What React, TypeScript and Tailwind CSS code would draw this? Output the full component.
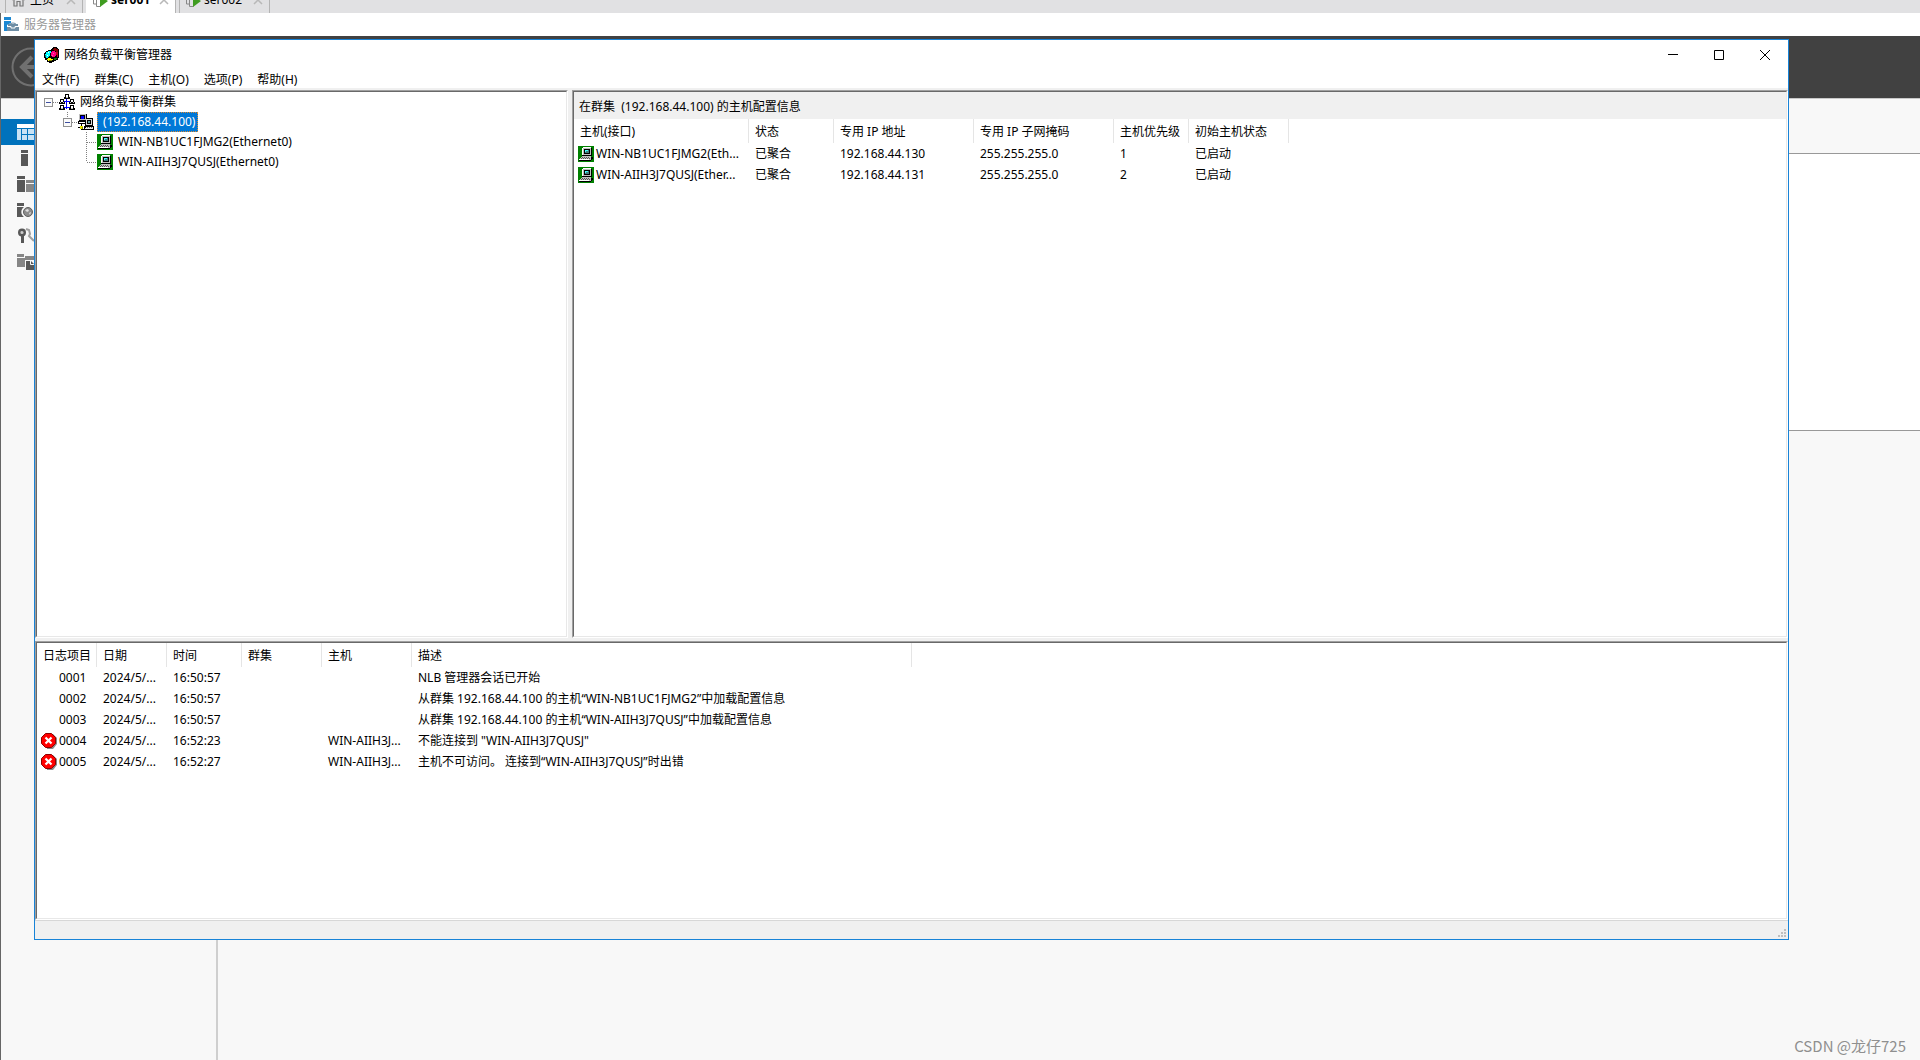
import React from 'react';

type PaneProps = { className?: string; children: React.ReactNode };

const menus = ['文件(F)', '群集(C)', '主机(O)', '选项(P)', '帮助(H)'];

const hosts = [
  { name: 'WIN-NB1UC1FJMG2(Ethernet0)', short: 'WIN-NB1UC1FJMG2(Eth...', status: '已聚合', ip: '192.168.44.130', mask: '255.255.255.0', priority: '1', initial: '已启动' },
  { name: 'WIN-AIIH3J7QUSJ(Ethernet0)', short: 'WIN-AIIH3J7QUSJ(Ether...', status: '已聚合', ip: '192.168.44.131', mask: '255.255.255.0', priority: '2', initial: '已启动' },
];

const logs = [
  { id: '0001', error: false, date: '2024/5/...', time: '16:50:57', cluster: '', host: '', text: 'NLB 管理器会话已开始' },
  { id: '0002', error: false, date: '2024/5/...', time: '16:50:57', cluster: '', host: '', text: '从群集 192.168.44.100 的主机“WIN-NB1UC1FJMG2”中加载配置信息' },
  { id: '0003', error: false, date: '2024/5/...', time: '16:50:57', cluster: '', host: '', text: '从群集 192.168.44.100 的主机“WIN-AIIH3J7QUSJ”中加载配置信息' },
  { id: '0004', error: true, date: '2024/5/...', time: '16:52:23', cluster: '', host: 'WIN-AIIH3J...', text: '不能连接到 "WIN-AIIH3J7QUSJ"' },
  { id: '0005', error: true, date: '2024/5/...', time: '16:52:27', cluster: '', host: 'WIN-AIIH3J...', text: '主机不可访问。 连接到“WIN-AIIH3J7QUSJ”时出错' },
];

/* ---------- icons ---------- */

const NlbIcon = () => (
  <svg width="16" height="16" viewBox="0 0 16 16" shapeRendering="crispEdges">
    <path d="M9 0h4v1h1v1h1v9h-1v2h-2v1h-2v1H8v1H5v-1H3v-2H1v-2H0V6h1V5h1V4h2V3h3V2h1V1h1z" fill="#000" />
    <path d="M10 1h2v1h2v3h-2V4h-2V3H9V2h1z" fill="#800000" />
    <path d="M12 5h2v5h-1V8h-1z" fill="#c00020" />
    <path d="M4 4h3v2H6v3H5v1H4v1H2v-1H1V7h1V5h2z" fill="#00ffff" />
    <path d="M4 5h1v1H4zM3 8h1v1H3z" fill="#fff" />
    <path d="M8 4h3v1h1v4h-1v1H8V9H7V5h1z" fill="#ff0080" />
    <path d="M9 6h1v1H9zM8 8h1v1H8z" fill="#ff60b0" />
    <path d="M3 12h1v-1h3v1h2v1H8v1H4v-1H3z" fill="#ffff00" />
    <path d="M5 13h3v1H5z" fill="#808000" />
    <path d="M10 11h3v1h-1v1h-2z" fill="#008000" />
    <path d="M1 8h1v2H1z" fill="#008080" />
  </svg>
);

const HostIcon = () => (
  <svg className="shrink-0" width="16" height="16" viewBox="0 0 16 16" shapeRendering="crispEdges">
    <path d="M0 0h16v16H0z" fill="#008000" />
    <path d="M13 2h1v8h-1zM4 9h10v1H4zM13 11h2v2h-1v1h-1v1H1v-1h12z" fill="#000" />
    <path d="M5 1h8v8H5z" fill="#c0c0c0" />
    <path d="M5 1h8v1H5zM4 2h1v7H4z" fill="#fff" />
    <path d="M6 3h6v5H6z" fill="#000" />
    <path d="M7 4h4v3H7z" fill="#408080" />
    <path d="M7 4h3v1H7zM7 5h1v1H7z" fill="#40ffff" />
    <path d="M4 10h9v1H4zM3 11h10v1H3zM2 12h11v1H2zM1 13h12v1H1z" fill="#c0c0c0" />
    <path d="M4 11h1v1H4zM6 11h1v1H6zM8 11h1v1H8zM10 11h1v1h-1zM3 12h1v1H3zM5 12h1v1H5zM7 12h1v1H7zM9 12h1v1H9zM11 12h1v1h-1z" fill="#555" />
    <path d="M1 13h10v1H1z" fill="#fff" />
  </svg>
);

const ClusterIcon = () => (
  <svg className="shrink-0" width="16" height="16" viewBox="0 0 16 16" shapeRendering="crispEdges">
    <path d="M1 0h8v7H1zM0 7h9v3H0zM7 4h8v8H7zM6 12h10v4H6z" fill="#000" />
    <path d="M1 0h7v1H2v5H1zM2 5h6v1H2zM7 1h1v4H7z" fill="#c0c0c0" />
    <path d="M3 2h3v3H3z" fill="#0000ff" />
    <path d="M1 8h6v1H1z" fill="#fff" />
    <path d="M8 5h6v6H8z" fill="#d8d8d8" />
    <path d="M9 6h4v4H9z" fill="#000" />
    <path d="M10 7h2v2h-2z" fill="#60a0a0" />
    <path d="M8 13h7v1H8zM7 14h8v1H7z" fill="#e8e8e8" />
    <path d="M9 13h1v1H9zM11 13h1v1h-1zM13 13h1v1h-1z" fill="#707070" />
    <path d="M3 10h1v3H3zM0 13h2v1H0zM3 15h3v1H3z" fill="#000" />
    <path d="M2 12h3v3H2z" fill="#e8e800" />
    <path d="M4 13h1v2H4z" fill="#808000" />
  </svg>
);

const ClustersIcon = () => (
  <svg className="shrink-0" width="16" height="16" viewBox="0 0 16 16" shapeRendering="crispEdges">
    <path d="M7 5h1v10H7zM5 7h6v1H5zM5 13h6v1H5z" fill="#0000ff" />
    <path d="M6 0h4v3h1v2H5V3h1zM1 5h4v3h1v2H0V8h1zM11 5h4v3h1v2h-6V8h1zM1 11h4v3h1v2H0v-2h1zM11 11h4v3h1v2h-6v-2h1z" fill="#000" />
    <path d="M7 1h2v2H7zM2 6h2v2H2zM12 6h2v2h-2zM2 12h2v2H2zM12 12h2v2h-2z" fill="#fff" />
    <path d="M6 4h4v0zM1 8h1v1H1zM4 8h1v1H4zM11 8h1v1h-1zM14 8h1v1h-1zM2 14h2v1H2zM12 14h2v1h-2zM7 3h2v1H7z" fill="#c0c0c0" />
  </svg>
);

const ErrorIcon = () => (
  <svg className="shrink-0" width="16" height="16" viewBox="0 0 16 16">
    <path d="M5 1h7l4 4v6l-4 5H6z" fill="#8a8a8a" />
    <path d="M4.500 .5h6l4 4v6l-4 4h-6l-4-4v-6z" fill="#ff0000" stroke="#900000" />
    <path d="M4.500 4.500l6 6M10.500 4.500l-6 6" stroke="#fff" strokeWidth="2.200" />
  </svg>
);

const ServerManagerIcon = () => (
  <svg width="15" height="15" viewBox="0 0 15 15">
    <path d="M0 0h7v3H0zM0 4h7v2L3 8v6H0z" fill="#1c87d2" />
    <path d="M6.500 7.500c0-2 5-2 5 0" fill="none" stroke="#6f8ea5" strokeWidth="1.200" />
    <path d="M4 7h10v3H4zM3 10h12v4H3z" fill="#6f8ea5" />
    <path d="M3 9.500h4v1.500h4V9.500h4" fill="none" stroke="#fff" strokeWidth="1" />
  </svg>
);

const HomeIcon = () => (
  <svg width="15" height="14" viewBox="0 0 15 14" fill="none" stroke="#777" strokeWidth="1.200">
    <path d="M1 7l6.500-6L14 7M3 6v7h3V8.500h3V13h3V6" />
  </svg>
);

const VmIcon = () => (
  <svg width="17" height="15" viewBox="0 0 17 15">
    <path d="M1.500 2v9h3M4.500 1v12.500h4" fill="none" stroke="#888" />
    <path d="M8 3l8 5-8 6z" fill="#3f9c20" />
  </svg>
);

const TabClose = () => (
  <svg width="10" height="10" viewBox="0 0 10 10" stroke="#b8b8b8" strokeWidth="1.500">
    <path d="M1 1l8 8M9 1L1 9" />
  </svg>
);

const sideIcons = [
  <svg key="dashboard" width="17" height="16" viewBox="0 0 17 16">
    <path d="M0 0h17v4H0z" fill="#fff" />
    <path d="M0 5h4v11H0zM5 5h5v5H5zM11 5h6v5h-6zM5 11h5v5H5zM11 11h6v5h-6z" fill="#c8e2f4" />
  </svg>,
  <svg key="local" width="17" height="16" viewBox="0 0 17 16" fill="#585858">
    <path d="M4 0h7v3H4zM4 4h7v12H4z" />
  </svg>,
  <svg key="all" width="17" height="16" viewBox="0 0 17 16">
    <path d="M0 0h8v3H0zM0 4h8v12H0z" fill="#585858" />
    <path d="M9 4h8v3H9zM9 8h8v8H9z" fill="#868686" />
  </svg>,
  <svg key="files" width="17" height="16" viewBox="0 0 17 16">
    <path d="M0 1h7v3H0zM0 5h7a6 6 0 0 0 0 10H0z" fill="#585858" />
    <circle cx="11" cy="10" r="4.500" fill="#8c8c8c" stroke="#606060" />
    <path d="M8 8l3-1 1 2-2 1zM12 11l2-1-1 3z" fill="#e0e0e0" />
  </svg>,
  <svg key="keys" width="17" height="16" viewBox="0 0 17 16">
    <path d="M9 1l3 1 1 4-1 2 5 5" fill="none" stroke="#a0a0a0" strokeWidth="2" />
    <circle cx="5" cy="4.500" r="2.800" fill="#ccc" stroke="#585858" strokeWidth="2.400" />
    <path d="M4 8h3v7H4z" fill="#585858" />
  </svg>,
  <svg key="storage" width="17" height="16" viewBox="0 0 17 16">
    <path d="M0 0h7v3H0zM0 4h8v9H0zM8 2h9v4H8z" fill="#868686" />
    <path d="M9 7h5l3 3v6H9z" fill="#585858" />
    <path d="M13.500 7v3.500H17" fill="none" stroke="#f7f7f7" />
  </svg>,
];

/* ---------- tree ---------- */

const Expander = ({ child, label }: { child?: boolean; label: string }) => (
  <button type="button" aria-label={label} className="h-5 w-[19px] shrink-0">
    <svg width="19" height="20" viewBox="0 0 19 20" shapeRendering="crispEdges" fill="none">
      {child && <path d="M8.500 0v5" stroke="#808080" strokeDasharray="1 1" />}
      <path d="M13 10.500h6" stroke="#808080" strokeDasharray="1 1" />
      <rect x="4.500" y="6.500" width="8" height="8" fill="#fafafa" stroke="#919191" />
      <path d="M6 10.500h5" stroke="#3e4fa0" />
    </svg>
  </button>
);

const Branch = ({ last }: { last: boolean }) => (
  <svg className="shrink-0" width="19" height="20" viewBox="0 0 19 20" shapeRendering="crispEdges" fill="none" stroke="#808080" strokeDasharray="1 1">
    <path d={last ? 'M8.500 0v10' : 'M8.500 0v20'} />
    <path d="M9 10.500h10" />
  </svg>
);

const TreePane = () => (
  <ul className="pl-[3px]">
    <li>
      <div className="flex h-5 items-center">
        <Expander label="折叠群集列表" />
        <ClustersIcon />
        <span className="ml-[3px] px-0.5">网络负载平衡群集</span>
      </div>
      <ul className="pl-[19px]">
        <li>
          <div className="flex h-5 items-center">
            <Expander child label="折叠群集" />
            <ClusterIcon />
            <span className="ml-[3px] h-5 whitespace-pre border border-dotted border-[#e08a30] bg-[#0078d7] px-0.5 leading-[18px] text-white"> (192.168.44.100)</span>
          </div>
          <ul className="pl-[19px]">
            {hosts.map((host, i) => (
              <li key={host.name} className="flex h-5 items-center">
                <Branch last={i === hosts.length - 1} />
                <HostIcon />
                <span className="ml-[3px] px-0.5">{host.name}</span>
              </li>
            ))}
          </ul>
        </li>
      </ul>
    </li>
  </ul>
);

/* ---------- lists ---------- */

const Th = ({ children }: { children: React.ReactNode }) => (
  <th className="h-6 whitespace-nowrap border-r border-[#e5e5e5] pl-1.5 pt-0.5 text-left font-normal">{children}</th>
);

const Td = ({ children }: { children?: React.ReactNode }) => (
  <td className="h-[21px] whitespace-nowrap pl-1.5">{children}</td>
);

const HostTable = () => (
  <table className="w-[715px] table-fixed border-separate border-spacing-0">
    <colgroup>
      <col className="w-[175px]" />
      <col className="w-[85px]" />
      <col className="w-[140px]" />
      <col className="w-[140px]" />
      <col className="w-[75px]" />
      <col className="w-[100px]" />
    </colgroup>
    <thead>
      <tr>
        <Th>主机(接口)</Th>
        <Th>状态</Th>
        <Th>专用 IP 地址</Th>
        <Th>专用 IP 子网掩码</Th>
        <Th>主机优先级</Th>
        <Th>初始主机状态</Th>
      </tr>
    </thead>
    <tbody>
      {hosts.map((host) => (
        <tr key={host.name}>
          <td className="h-[21px] pl-1">
            <div className="flex items-center gap-0.5">
              <HostIcon />
              <span className="whitespace-nowrap">{host.short}</span>
            </div>
          </td>
          <Td>{host.status}</Td>
          <Td>{host.ip}</Td>
          <Td>{host.mask}</Td>
          <Td>{host.priority}</Td>
          <Td>{host.initial}</Td>
        </tr>
      ))}
    </tbody>
  </table>
);

const LogTable = () => (
  <table className="w-[875px] table-fixed border-separate border-spacing-0">
    <colgroup>
      <col className="w-[60px]" />
      <col className="w-[70px]" />
      <col className="w-[75px]" />
      <col className="w-[80px]" />
      <col className="w-[90px]" />
      <col className="w-[500px]" />
    </colgroup>
    <thead>
      <tr>
        <Th>日志项目</Th>
        <Th>日期</Th>
        <Th>时间</Th>
        <Th>群集</Th>
        <Th>主机</Th>
        <Th>描述</Th>
      </tr>
    </thead>
    <tbody>
      {logs.map((log) => (
        <tr key={log.id}>
          <td className="h-[21px] pl-1">
            <div className="flex items-center gap-0.5">
              {log.error ? <ErrorIcon /> : <span className="w-4" />}
              <span>{log.id}</span>
            </div>
          </td>
          <Td>{log.date}</Td>
          <Td>{log.time}</Td>
          <Td>{log.cluster}</Td>
          <Td>{log.host}</Td>
          <Td>{log.text}</Td>
        </tr>
      ))}
    </tbody>
  </table>
);

// Sunken Win32 client edge: dark on top and left, light on right and bottom
const Pane = ({ className, children }: PaneProps) => (
  <section className={`border border-b-white border-l-[#a0a0a0] border-r-white border-t-[#a0a0a0] ${className ?? ''}`}>
    <div className="h-full overflow-hidden border border-b-[#e8e8e8] border-l-[#696969] border-r-[#e8e8e8] border-t-[#696969] bg-white">
      {children}
    </div>
  </section>
);

const NlbWindow = () => (
  <div className="absolute bottom-[120px] left-[34px] right-[131px] top-[39px] flex flex-col border border-[#1883d7] bg-white">
    <header className="flex h-[29px] shrink-0 items-center pl-[9px]">
      <NlbIcon />
      <h1 className="ml-1 flex-1">网络负载平衡管理器</h1>
      <button type="button" aria-label="最小化" className="flex h-full w-[46px] items-center justify-center">
        <svg width="10" height="10" viewBox="0 0 10 10" stroke="#000"><path d="M0 4.500h10" /></svg>
      </button>
      <button type="button" aria-label="最大化" className="flex h-full w-[46px] items-center justify-center">
        <svg width="10" height="10" viewBox="0 0 10 10" stroke="#000" fill="none"><path d="M.5 .5h9v9h-9z" /></svg>
      </button>
      <button type="button" aria-label="关闭" className="flex h-full w-[46px] items-center justify-center">
        <svg width="10" height="10" viewBox="0 0 10 10" stroke="#000"><path d="M0 0l10 10M10 0L0 10" /></svg>
      </button>
    </header>

    <nav className="flex h-[19px] shrink-0 items-center gap-px pt-0.5">
      {menus.map((menu) => (
        <button key={menu} type="button" className="px-[7px]">{menu}</button>
      ))}
    </nav>

    <div className="flex min-h-0 flex-1 flex-col bg-[#f0f0f0] pt-0.5">
      <div className="flex min-h-0 flex-1 gap-1">
        <Pane className="w-[533px] shrink-0">
          <TreePane />
        </Pane>
        <Pane className="min-w-0 flex-1">
          <h2 className="flex h-[27px] items-center whitespace-pre bg-[#f0f0f0] pl-[5px] pt-0.5">{'在群集  (192.168.44.100) 的主机配置信息'}</h2>
          <HostTable />
        </Pane>
      </div>
      <Pane className="mt-[3px] h-[279px] shrink-0">
        <LogTable />
      </Pane>
    </div>

    <footer className="flex h-[19px] shrink-0 items-end justify-end border-t border-[#d7d7d7] bg-[#f0f0f0] pb-0.5 pr-0.5">
      <svg width="8" height="8" viewBox="0 0 8 8" fill="#bfbfbf" shapeRendering="crispEdges">
        <path d="M6 0h2v2H6zM3 3h2v2H3zM6 3h2v2H6zM0 6h2v2H0zM3 6h2v2H3zM6 6h2v2H6z" />
      </svg>
    </footer>
  </div>
);

const VmTabs = () => (
  <div className="flex h-[13px] shrink-0 items-end gap-[3px] overflow-hidden bg-[#e1e1e3] pl-[5px]">
    <button type="button" className="flex h-[26px] w-[78px] items-center border-x border-[#b4b4b4] pl-[5px] pr-[6px]">
      <HomeIcon />
      <span className="ml-1 flex-1 text-left">主页</span>
      <TabClose />
    </button>
    <button type="button" className="flex h-[26px] w-[90px] items-center border-r border-[#b4b4b4] bg-white pl-[6px] pr-[6px]">
      <VmIcon />
      <span className="ml-0.5 flex-1 text-left font-bold">ser001</span>
      <TabClose />
    </button>
    <button type="button" className="flex h-[26px] w-[91px] items-center border-x border-[#b4b4b4] pl-[5px] pr-[6px]">
      <VmIcon />
      <span className="ml-0.5 flex-1 text-left">ser002</span>
      <TabClose />
    </button>
  </div>
);

const App = () => (
  <div className="relative flex h-screen flex-col overflow-hidden bg-[#f8f8f8] font-['Noto_Sans','Noto_Sans_CJK_SC',sans-serif] text-xs text-black">
    <VmTabs />

    <div className="flex min-h-0 flex-1 flex-col border-l border-[#666]">
      <div className="flex h-[23px] shrink-0 items-center bg-white pl-[3px] text-[#999]">
        <ServerManagerIcon />
        <span className="ml-[5px]">服务器管理器</span>
      </div>
      <div className="h-[62px] shrink-0 bg-[#414141] pl-[10px] pt-[11px]">
        <svg width="40" height="40" viewBox="0 0 40 40" fill="none" stroke="#707070">
          <circle cx="20" cy="20" r="18.500" strokeWidth="2" />
          <path d="M21 10l-10 10 10 10M12 20h20" strokeWidth="4" />
        </svg>
      </div>

      <div className="flex min-h-0 flex-1 border-t border-[#c8c8c8]">
        <aside className="w-[217px] shrink-0 border-r-2 border-[#cfcfcf] pt-5">
          {sideIcons.map((icon) => (
            <div key={icon.key} className="flex h-[26px] items-center pl-4 first:bg-[#0072bc]">{icon}</div>
          ))}
        </aside>
        <main className="flex-1 pt-[54px]">
          <div className="h-[278px] border-y border-[#999] bg-white" />
        </main>
      </div>
    </div>

    <NlbWindow />

    <p className="absolute bottom-1 right-[14px] font-['Noto_Sans_CJK_SC',sans-serif] text-[15px] text-[#8f8f8f]">CSDN @龙仔725</p>
  </div>
);

export default App;
